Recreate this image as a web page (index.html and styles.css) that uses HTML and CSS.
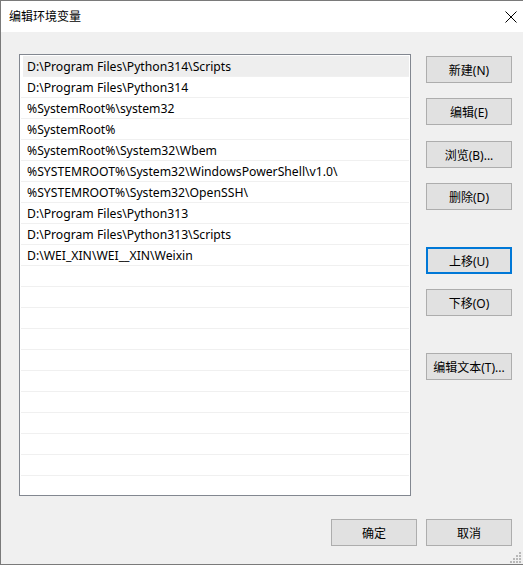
FILE: index.html
```html
<!DOCTYPE html>
<html lang="zh-CN">
<head>
<meta charset="utf-8">
<title>编辑环境变量</title>
<link rel="stylesheet" href="styles.css">
</head>
<body>
<div class="window">
  <header class="titlebar">
    <span class="title">编辑环境变量</span>
    <svg class="close" width="12" height="12" viewBox="0 0 12 12"><path d="M0.5 0.5 L11.5 11.5 M11.5 0.5 L0.5 11.5" stroke="#000" stroke-width="1" fill="none"/></svg>
  </header>
  <main class="content">
    <div class="main-row">
      <div class="listbox">
        <div class="row selected">D:\Program Files\Python314\Scripts</div>
        <div class="row">D:\Program Files\Python314</div>
        <div class="row">%SystemRoot%\system32</div>
        <div class="row">%SystemRoot%</div>
        <div class="row">%SystemRoot%\System32\Wbem</div>
        <div class="row">%SYSTEMROOT%\System32\WindowsPowerShell\v1.0\</div>
        <div class="row">%SYSTEMROOT%\System32\OpenSSH\</div>
        <div class="row">D:\Program Files\Python313</div>
        <div class="row">D:\Program Files\Python313\Scripts</div>
        <div class="row">D:\WEI_XIN\WEI__XIN\Weixin</div>
        <div class="row"></div><div class="row"></div><div class="row"></div>
        <div class="row"></div><div class="row"></div><div class="row"></div>
        <div class="row"></div><div class="row"></div><div class="row"></div>
        <div class="row"></div><div class="row"></div>
      </div>
      <div class="side">
        <button class="btn">新建(N)</button>
        <button class="btn">编辑(E)</button>
        <button class="btn">浏览(B)...</button>
        <button class="btn">删除(D)</button>
        <button class="btn group focus">上移(U)</button>
        <button class="btn">下移(O)</button>
        <button class="btn group">编辑文本(T)...</button>
      </div>
    </div>
    <footer class="footer">
      <button class="btn">确定</button>
      <button class="btn">取消</button>
    </footer>
  </main>
  <svg class="grip" width="12" height="12" viewBox="0 0 12 12">
    <g fill="#b8b8b8">
      <rect x="9" y="1" width="2" height="2"/>
      <rect x="6" y="4" width="2" height="2"/><rect x="9" y="4" width="2" height="2"/>
      <rect x="3" y="7" width="2" height="2"/><rect x="6" y="7" width="2" height="2"/><rect x="9" y="7" width="2" height="2"/>
      <rect x="0" y="10" width="2" height="2"/><rect x="3" y="10" width="2" height="2"/><rect x="6" y="10" width="2" height="2"/><rect x="9" y="10" width="2" height="2"/>
    </g>
  </svg>
</div>
</body>
</html>
```

FILE: styles.css
```css
* { box-sizing: border-box; }

html, body {
  margin: 0;
  padding: 0;
  background: #f0f0f0;
}

body {
  font-family: "Noto Sans", "Noto Sans CJK SC", sans-serif;
  font-size: 12px;
  color: #000;
}

.window {
  position: relative;
  width: 523px;
  height: 565px;
  background: #f0f0f0;
  border-top: 1px solid #7a7a7a;
  border-left: 1px solid #7a7a7a;
  border-bottom: 1px solid #7a7a7a;
  display: flex;
  flex-direction: column;
  overflow: hidden;
}

.titlebar {
  height: 31px;
  flex: none;
  background: #fff;
  display: flex;
  align-items: center;
  justify-content: space-between;
  padding: 0 6px 0 8px;
}

.title {
  font-size: 12px;
  line-height: 16px;
}

.close {
  display: block;
}

.content {
  flex: 1;
  padding: 22px 11px 0 18px;
  display: flex;
  flex-direction: column;
}

.main-row {
  display: flex;
  gap: 15px;
}

.listbox {
  width: 392px;
  height: 442px;
  background: #fff;
  border: 1px solid #828790;
  padding: 1px 1px 0 1px;
  overflow: hidden;
}

.row {
  height: 21px;
  padding-top: 1px;
  line-height: 20px;
  font-size: 12.2px;
  padding-left: 6px;
  border-bottom: 1px solid #f0f0f0;
  white-space: nowrap;
}

.row.selected {
  background: #eeeeee;
  margin-left: 2px;
  padding-left: 4px;
}

.side {
  display: flex;
  flex-direction: column;
  padding-top: 2px;
  gap: 15px;
}

.btn {
  width: 86px;
  height: 27px;
  margin: 0;
  padding: 0;
  background: #e1e1e1;
  border: 1px solid #adadad;
  font-family: inherit;
  font-size: 12px;
  color: #000;
  text-align: center;
}

.side .btn:nth-child(3) { margin-top: 1px; }

.btn.group { margin-top: 22px; }

.btn.focus {
  border: 2px solid #0078d7;
  background: #e1e1e1;
}

.footer {
  display: flex;
  justify-content: flex-end;
  gap: 9px;
  margin-top: 23px;
}

.grip {
  position: absolute;
  right: 1px;
  bottom: 1px;
}
```
